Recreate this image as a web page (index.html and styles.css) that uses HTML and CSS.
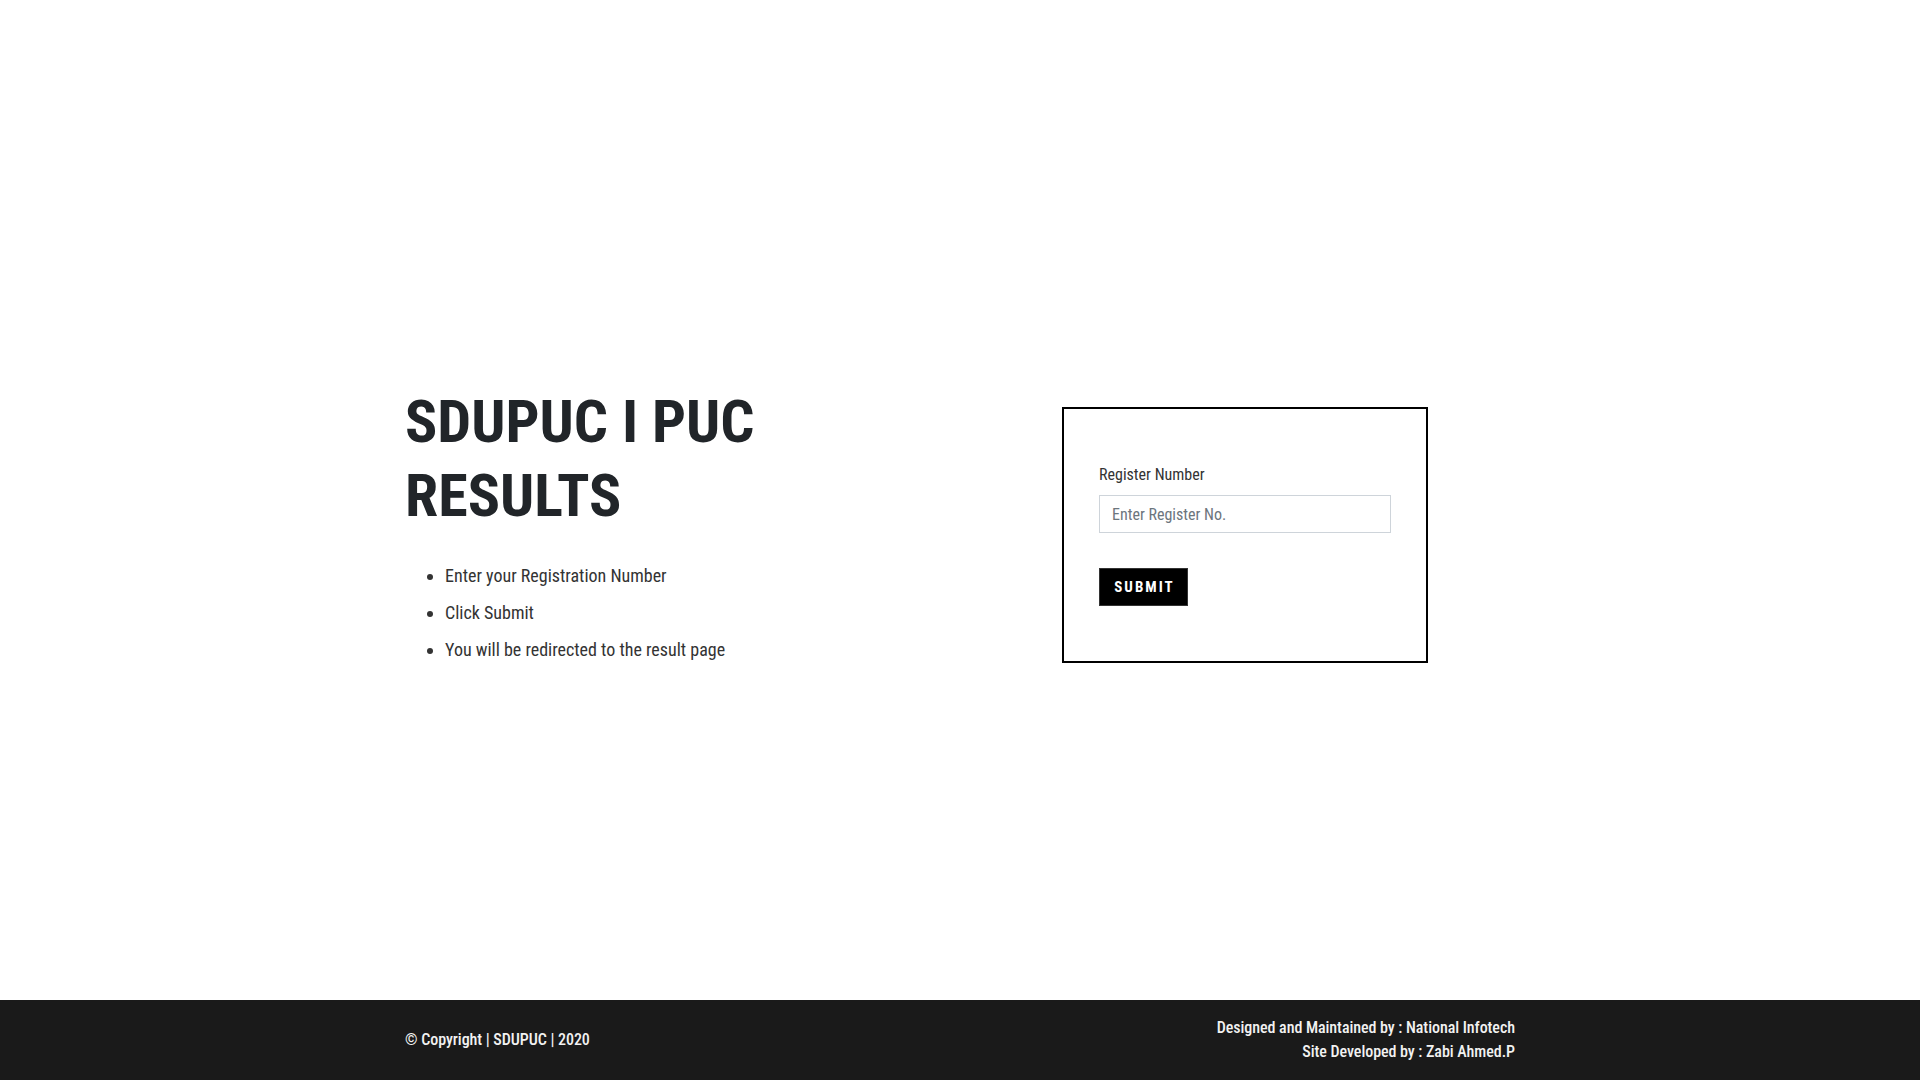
FILE: index.html
```html
<!DOCTYPE html>
<html lang="en">
<head>
<meta charset="utf-8">
<title>SDUPUC I PUC Results</title>
<link rel="stylesheet" href="styles.css">
</head>
<body>
<div class="page">
  <main class="main">
    <div class="container row">
      <div class="col col-left">
        <h1 class="title">SDUPUC I PUC<br>RESULTS</h1>
        <ul class="steps">
          <li>Enter your Registration Number</li>
          <li>Click Submit</li>
          <li>You will be redirected to the result page</li>
        </ul>
      </div>
      <div class="col col-right">
        <form class="form-box" onsubmit="return false;">
          <label class="label" for="reg">Register Number</label>
          <input class="input" id="reg" type="text" placeholder="Enter Register No.">
          <button class="btn" type="submit">SUBMIT</button>
        </form>
      </div>
    </div>
  </main>
  <footer class="footer">
    <div class="container footer-inner">
      <div class="copy">© Copyright | SDUPUC | 2020</div>
      <div class="credits">
        <div>Designed and Maintained by : National Infotech</div>
        <div>Site Developed by : Zabi Ahmed.P</div>
      </div>
    </div>
  </footer>
</div>
</body>
</html>
```
FILE: styles.css
```css
* { box-sizing: border-box; }
html, body { margin: 0; padding: 0; }
body {
  font-family: "Roboto Condensed", Roboto, "Liberation Sans", sans-serif;
  font-stretch: 75%;
  color: #212529;
  background: #fff;
}
.page {
  height: 1080px;
  display: flex;
  flex-direction: column;
}
.main {
  flex: 1;
  padding-top: 385px;
}
.container {
  width: 1140px;
  margin: 0 auto;
  padding: 0 15px;
}
.row {
  display: flex;
}
.col {
  width: 50%;
}
.col-left { padding-right: 15px; }
.col-right {
  padding-left: 15px;
  display: flex;
  justify-content: center;
  align-items: flex-start;
}
.title {
  margin: 0 0 24px;
  font-size: 60px;
  line-height: 74px;
  font-weight: 700;
  color: #212529;
}
.steps {
  margin: 0;
  padding-left: 40px;
  font-size: 18px;
  line-height: 37px;
  font-weight: 400;
  color: #333;
}
.form-box {
  margin-top: 22px;
  width: 366px;
  height: 256px;
  border: 2px solid #000;
  padding: 54px 34px 0 35px;
  display: flex;
  flex-direction: column;
  align-items: flex-start;
}
.label {
  font-size: 16px;
  line-height: 24px;
  color: #333;
  margin-bottom: 8px;
}
.input {
  width: 292px;
  height: 38px;
  border: 1px solid #ced4da;
  padding: 0 12px;
  font-family: inherit;
  font-stretch: 75%;
  font-size: 16px;
  color: #495057;
  outline: none;
}
.input::placeholder { color: #6c757d; }
.btn {
  margin-top: 35px;
  width: 89px;
  height: 38px;
  background: #000;
  color: #fff;
  border: 1px solid #333;
  font-family: inherit;
  font-stretch: 75%;
  font-weight: 700;
  font-size: 15px;
  letter-spacing: 2px;
  padding: 0 0 0 2px;
  cursor: pointer;
}
.footer {
  height: 80px;
  background: #1a1a1a;
  color: #f2f2f2;
}
.footer-inner {
  height: 100%;
  display: flex;
  justify-content: space-between;
  align-items: center;
  font-size: 16px;
  font-weight: 500;
  line-height: 24.5px;
  letter-spacing: -0.05px;
}
.credits { text-align: right; }
```
